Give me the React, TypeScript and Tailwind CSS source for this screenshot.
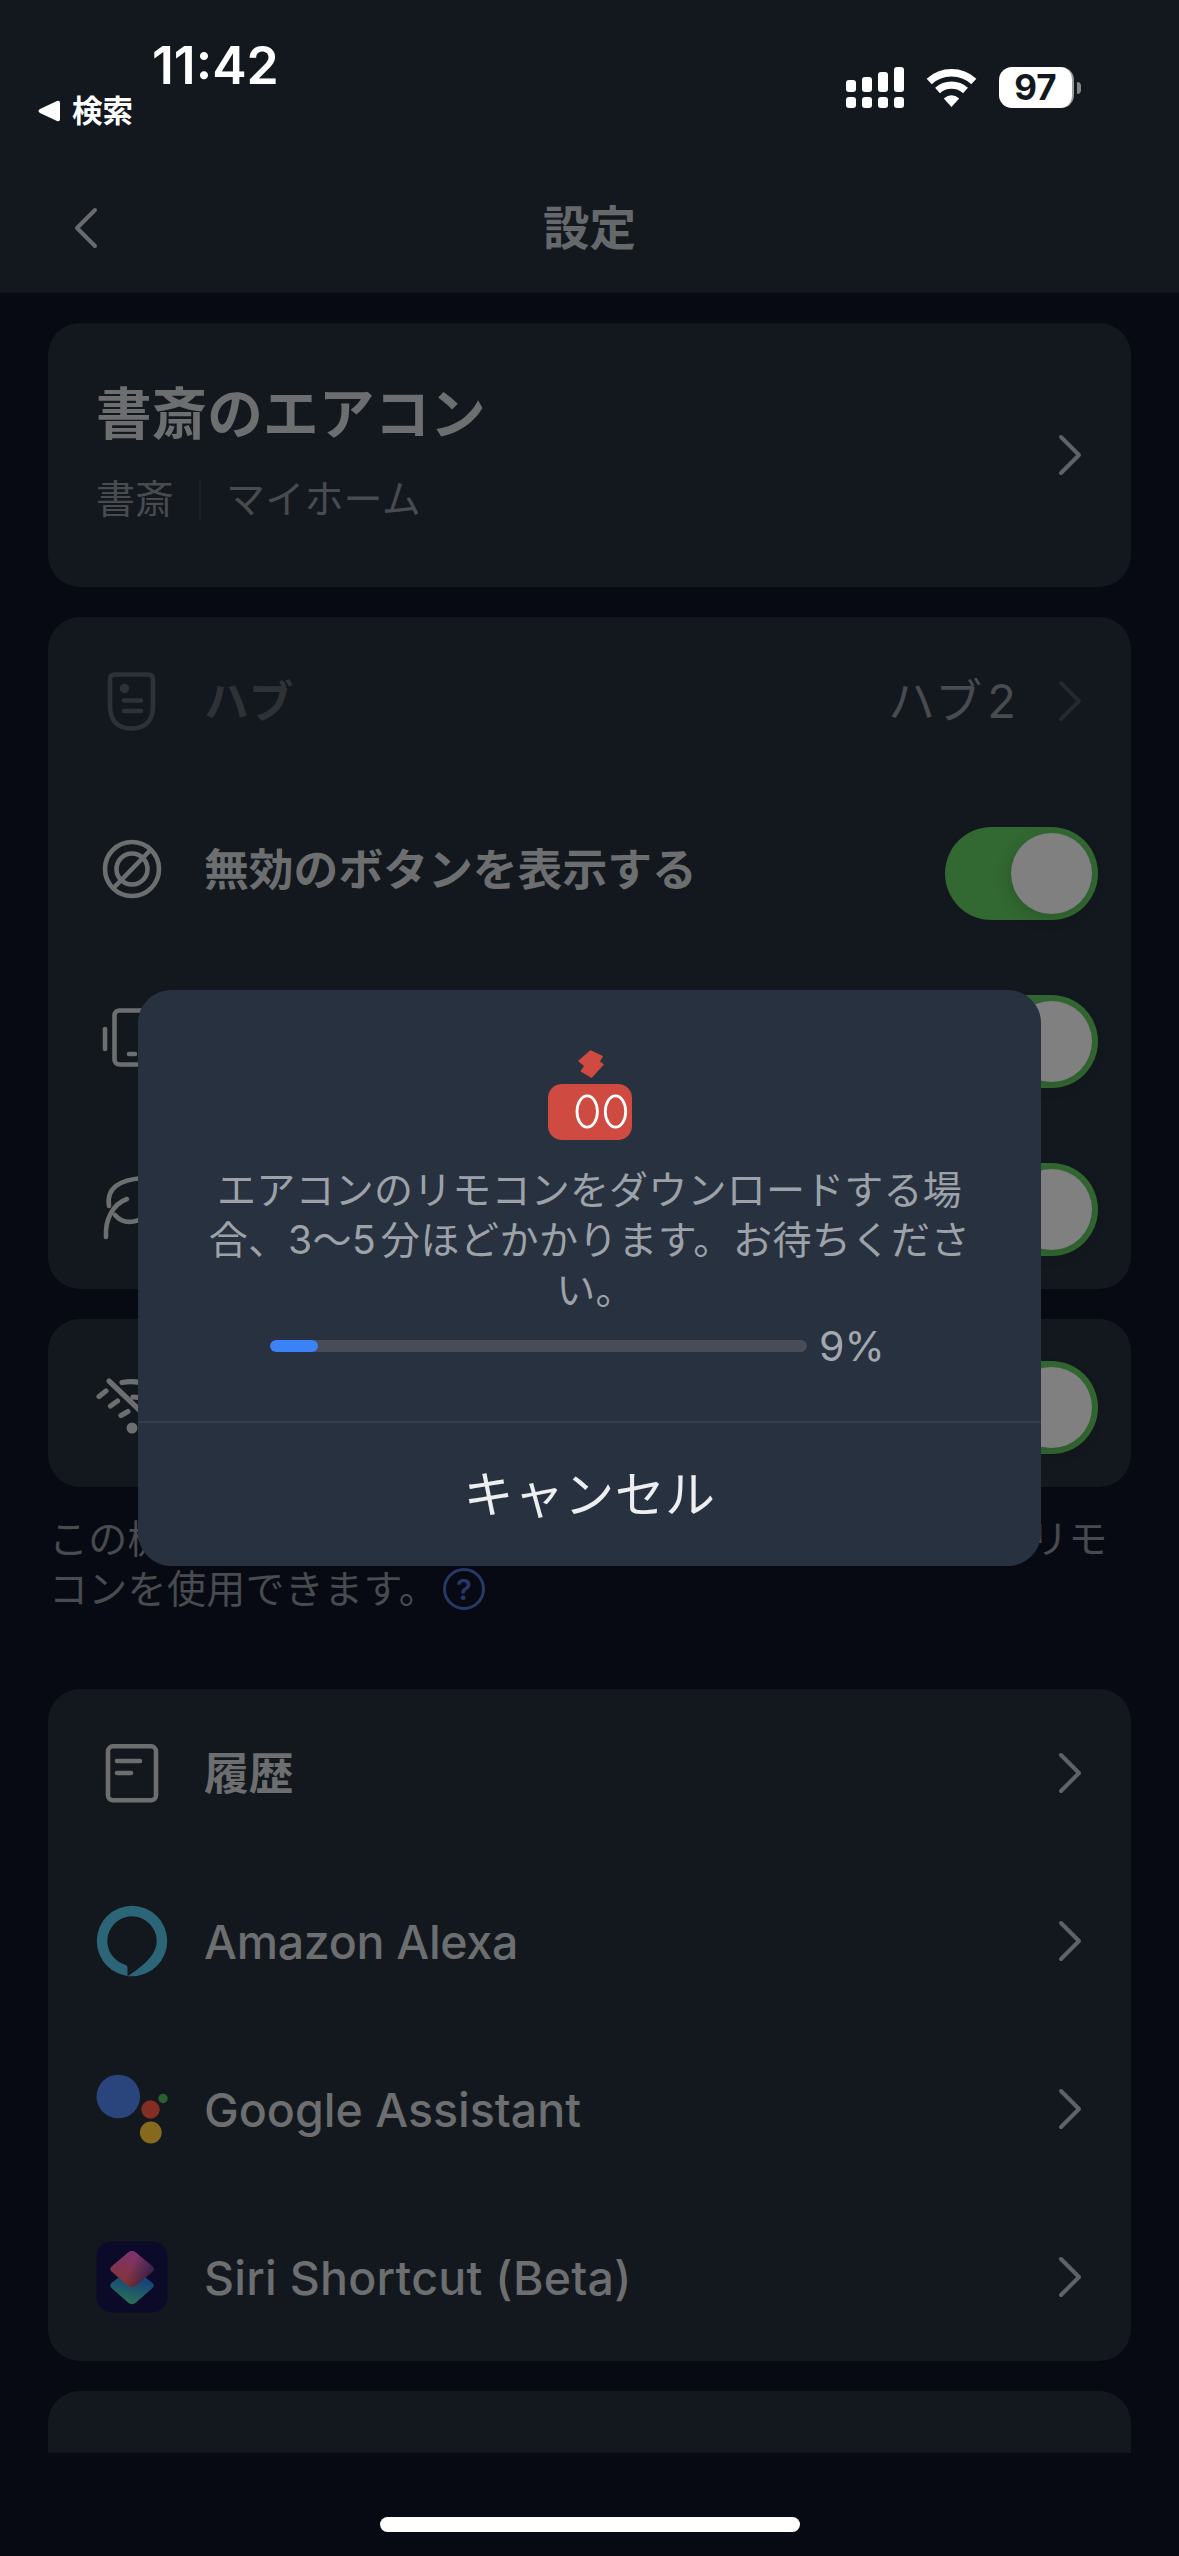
import type { ReactNode } from "react";

function Chevron({ className = "text-[#5f6266]" }: { className?: string }) {
  return (
    <svg viewBox="0 0 24 42" className={`h-[42px] w-6 shrink-0 ${className}`} fill="none" stroke="currentColor" strokeWidth="4" strokeLinecap="round" strokeLinejoin="round">
      <path d="M3 3 21 21 3 39" />
    </svg>
  );
}

function Toggle() {
  return (
    <div className="mt-[9px] flex h-[93px] w-[153px] shrink-0 items-center justify-end rounded-full bg-[#326832] pr-1.5">
      <div className="size-[81px] rounded-full bg-[#808080] shadow-[-2px_4px_16px_rgba(0,0,0,0.15)]" />
    </div>
  );
}

function LineIcon({ children }: { children: ReactNode }) {
  return (
    <svg viewBox="0 0 72 72" className="size-[72px]" fill="none" stroke="currentColor" strokeWidth="4.6" strokeLinecap="round" strokeLinejoin="round">
      {children}
    </svg>
  );
}

const HubIcon = () => (
  <LineIcon>
    <path d="M19 9.500H52Q57 9.500 57 14.500V41C57 55 50 63.500 35.500 63.500S14 55 14 41V14.500Q14 9.500 19 9.500Z" />
    <circle cx="28.500" cy="23.500" r="4.700" fill="currentColor" stroke="none" />
    <path d="M28 35.500H45M28 46H45" />
  </LineIcon>
);

const DisabledIcon = () => (
  <LineIcon>
    <circle cx="36" cy="36" r="27" />
    <circle cx="36" cy="36" r="15.500" />
    <path d="M18.500 54 53.500 18" />
  </LineIcon>
);

const VibrateIcon = () => (
  <LineIcon>
    <rect x="18.500" y="9.500" width="35" height="54" rx="5" />
    <path d="M9 28V48M63 28V48M33 53H39" />
  </LineIcon>
);

const FeatherIcon = () => (
  <LineIcon>
    <path d="M13 37C10 18 25 11 46 9M10 68C9 50 17 35 31 30M19 46C28 57 48 55 55 38" />
  </LineIcon>
);

const WifiOffIcon = () => (
  <LineIcon>
    <g strokeWidth="5.200">
      <path d="M13 14 57 56" />
      <path d="M3 29.500 10 24M14.500 39 21.500 34M25 48.500 32 44.500M26 15.500Q50 11 68 29M37 30Q49 30 58 39" />
    </g>
    <circle cx="36" cy="61" r="5.500" fill="currentColor" stroke="none" />
  </LineIcon>
);

const HistoryIcon = () => (
  <LineIcon>
    <rect x="12" y="9.300" width="48" height="54" rx="5" />
    <path d="M21 24H44M21 36H35" />
  </LineIcon>
);

const AlexaIcon = () => (
  <svg viewBox="0 0 72 72" className="size-[72px]">
    <path fill="#2c6478" fillRule="evenodd" d="M36 .8A35.200 35.200 0 1 1 36 71.200A35.200 35.200 0 1 1 36 .8ZM31.500 71.300V62Q31.500 60.500 29 59.700A24.700 24.700 0 1 1 60.700 36C60.700 49 49 60 31.500 71.300Z" />
  </svg>
);

const AssistantIcon = () => (
  <svg viewBox="0 0 72 72" className="size-[72px]">
    <circle cx="22.300" cy="23.500" r="21.800" fill="#29457c" />
    <circle cx="54.500" cy="36.500" r="9.200" fill="#832d23" />
    <circle cx="67" cy="25.500" r="4.700" fill="#29602f" />
    <circle cx="54.800" cy="59.500" r="10.900" fill="#856a1e" />
  </svg>
);

const ShortcutIcon = () => (
  <svg viewBox="0 0 72 72" className="size-[72px]">
    <defs>
      <linearGradient id="sc-low" x1="0.700" y1="0" x2="0.400" y2="1">
        <stop offset="0.300" stopColor="#17447b" />
        <stop offset="1" stopColor="#297353" />
      </linearGradient>
      <linearGradient id="sc-high" x1="0.600" y1="0" x2="0.400" y2="1">
        <stop offset="0" stopColor="#7c3275" />
        <stop offset="0.900" stopColor="#863434" />
      </linearGradient>
      <linearGradient id="sc-shade" x1="0.500" y1="0.400" x2="1" y2="0.600">
        <stop offset="0" stopColor="#26204a" stopOpacity="0" />
        <stop offset="1" stopColor="#2b1a45" stopOpacity="0.900" />
      </linearGradient>
    </defs>
    <rect x="0.500" y="0.500" width="71" height="71" rx="15" fill="#0c0a29" />
    <path d="M40 29 56.500 42Q59 44.500 56.500 47L40 61.500Q36 65 32 61.500L15.500 47Q13 44.500 15.500 42L32 29Q36 26 40 29Z" fill="url(#sc-low)" />
    <path d="M40 11.500 56.500 25.500Q59 28 56.500 30.500L40 44.500Q36 48 32 44.500L15.500 30.500Q13 28 15.500 25.500L32 11.500Q36 8 40 11.500Z" fill="url(#sc-high)" />
    <path d="M40 11.500 56.500 25.500Q59 28 56.500 30.500L40 44.500Q36 48 32 44.500L15.500 30.500Q13 28 15.500 25.500L32 11.500Q36 8 40 11.500Z" fill="url(#sc-shade)" />
  </svg>
);

const RobotIcon = () => (
  <svg viewBox="0 0 84 92" className="h-[92px] w-[84px]">
    <path fill="#cf4a41" stroke="#cf4a41" strokeWidth="1.500" strokeLinejoin="round" d="M31 13 42.500 3 54 8.500 51 13.500 55 16.500 43.500 29 33.500 23 37 18Z" />
    <rect y="36" width="84" height="56" rx="14" fill="#cf4a41" />
    <g fill="none" stroke="#fff" strokeWidth="2.800">
      <ellipse cx="39.200" cy="63.500" rx="10.200" ry="15.700" />
      <ellipse cx="67.500" cy="63.500" rx="10.200" ry="15.700" />
    </g>
  </svg>
);

function Row({ icon, label, right, dim = false, font = "text-[44.800px] font-bold" }: { icon: ReactNode; label?: string; right: ReactNode; dim?: boolean; font?: string }) {
  return (
    <div className="flex h-[168px] items-center pl-12 pr-[33px]">
      <div className={`shrink-0 ${dim ? "text-[#2e3236]" : "text-[#6c6e70]"}`}>{icon}</div>
      <div className={`ml-9 flex-1 whitespace-nowrap pt-[3px] ${font} ${dim ? "text-[#2e3236]" : "text-[#6c6e70]"}`}>{label}</div>
      {right}
    </div>
  );
}

const Card = ({ children, className = "" }: { children: ReactNode; className?: string }) => (
  <section className={`mx-12 rounded-[32px] bg-[#13181e] ${className}`}>{children}</section>
);

const arrow = <Chevron className="mr-4 text-[#5f6266]" />;

function StatusBar() {
  return (
    <div className="flex h-[162px] justify-between text-white">
      <div className="pl-[38px] pt-9">
        <div className="pl-[114px] text-[51.700px] font-semibold leading-[58px]">11:42</div>
        <div className="mt-px flex h-8 items-center">
          <svg viewBox="0 0 23 22" className="h-[22px] w-[23px]">
            <path d="M2 9 19 1Q22 0 22 3V19Q22 22 19 21L2 13Q-1 11 2 9Z" fill="#fff" />
          </svg>
          <span className="ml-[11px] text-[30.500px] font-bold">検索</span>
        </div>
      </div>
      <div className="mt-[67px] flex h-[41px] pr-[98px]">
        <svg viewBox="0 0 58 41" className="h-[41px] w-[58px]" fill="#fff">
          <rect y="13" width="10" height="12" rx="3" />
          <rect x="16" y="10" width="10" height="15" rx="3" />
          <rect x="32" y="5" width="10" height="20" rx="3" />
          <rect x="48" y="0" width="10" height="25" rx="3" />
          <rect y="30" width="10" height="11" rx="3" />
          <rect x="16" y="30" width="10" height="11" rx="3" />
          <rect x="32" y="30" width="10" height="11" rx="3" />
          <rect x="48" y="30" width="10" height="11" rx="3" />
        </svg>
        <svg viewBox="0 0 52 41" className="ml-[22px] h-[41px] w-[52px]" fill="none" stroke="#fff">
          <path d="M3.200 14.500A33 33 0 0 1 47.800 14.500" strokeWidth="7.500" />
          <path d="M11.500 23.500A21 21 0 0 1 39.500 23.500" strokeWidth="7.200" />
          <path d="M25.500 40 17.800 31.500Q25.500 25 33.200 31.500Z" fill="#fff" stroke="none" />
        </svg>
        <div className="ml-[21px] flex h-[41px] w-[75px] items-center justify-center rounded-[13px] border-r-2 border-[#9a9c9e] bg-white text-[35px] font-bold leading-none text-[#12181e]">97</div>
        <div className="ml-[3px] mt-[15px] h-3 w-1 rounded-r-full bg-[#84878a]" />
      </div>
    </div>
  );
}

export default function App() {
  return (
    <div className="relative flex h-[2556px] w-[1179px] flex-col overflow-hidden bg-[#070a12] font-['Inter','Noto_Sans_CJK_JP',sans-serif]">
      <header className="h-[293px] shrink-0 bg-[#13181f]">
        <StatusBar />
        <div className="flex h-[131px] items-center pl-[74px] pr-[98px] text-[#66696c]">
          <Chevron className="rotate-180 text-[#696b6e]" />
          <h1 className="flex-1 pt-[2px] text-center text-[46.500px] font-bold">設定</h1>
        </div>
      </header>

      <main className="flex h-[2160px] shrink-0 flex-col gap-[30px] overflow-hidden pt-[30px]">
        <Card className="flex h-[264px] shrink-0 items-center pl-[48px] pr-[49px]">
          <div className="-mt-[12px] flex-1">
            <div className="text-[55.700px] font-bold leading-[80px] text-[#6c6e70]">書斎のエアコン</div>
            <div className="mt-[20px] flex h-[50px] items-center text-[39px] text-[#484b4f]">
              書斎
              <span className="mx-[25px] h-10 w-[2px] bg-[#1a1f26]" />
              <span className="tracking-[0.200px]">マイホーム</span>
            </div>
          </div>
          <Chevron />
        </Card>

        <Card className="shrink-0">
          <Row
            dim
            icon={<HubIcon />}
            label="ハブ"
            right={
              <>
                <span className="mr-[42px] text-[47px] text-[#484b4f] [word-spacing:-8px]">ハブ 2</span>
                <Chevron className="mr-4 text-[#24292e]" />
              </>
            }
          />
          <Row icon={<DisabledIcon />} label="無効のボタンを表示する" right={<Toggle />} />
          <Row icon={<VibrateIcon />} right={<Toggle />} />
          <Row icon={<FeatherIcon />} right={<Toggle />} />
        </Card>

        <div className="h-[340px] shrink-0">
          <Card>
            <Row icon={<WifiOffIcon />} right={<Toggle />} />
          </Card>
          <div className="mt-[27px] whitespace-nowrap pl-[49px] text-[39px] leading-[50px] tracking-[0.300px] text-[#484b4f]">
            <div>この機能をオンにすると、インターネット接続なしでもリモ</div>
            <div className="flex items-center">
              コンを使用できます。
              <span className="ml-[5px] flex size-[42px] items-center justify-center rounded-full border-[3px] border-[#273869] text-[29px] font-semibold leading-none text-[#273869]">?</span>
            </div>
          </div>
        </div>

        <Card className="shrink-0">
          <Row icon={<HistoryIcon />} label="履歴" right={arrow} />
          <Row font="text-[46.500px] font-medium tracking-[-0.300px]" icon={<AlexaIcon />} label="Amazon Alexa" right={arrow} />
          <Row font="text-[46.500px] font-medium" icon={<AssistantIcon />} label="Google Assistant" right={arrow} />
          <Row font="text-[46.500px] font-medium tracking-[0.250px]" icon={<ShortcutIcon />} label="Siri Shortcut (Beta)" right={arrow} />
        </Card>

        <Card className="flex h-[168px] shrink-0 items-center justify-center text-[43px] text-[#4a2629]">削除</Card>
      </main>

      <div className="mx-auto mt-16 h-[15px] w-[420px] shrink-0 rounded-full bg-white" />

      <div role="dialog" className="absolute left-[138px] top-[990px] flex h-[576px] w-[903px] flex-col rounded-[33px] bg-[#28313f]">
        <div className="flex h-[431px] flex-col items-center pt-[58px]">
          <RobotIcon />
          <p className="mt-[25px] whitespace-nowrap text-center text-[39px] leading-[50px] tracking-[0.200px] text-[#9da2a9]">
            エアコンのリモコンをダウンロードする場
            <br />
            <span className="tracking-[0.550px] [word-spacing:-7px]">合、3〜5 分ほどかかります。お待ちくださ</span>
            <br />
            <span className="pl-3">い。</span>
          </p>
          <div className="mt-[6px] flex h-[50px] w-full items-center pl-[132px]">
            <div className="h-3 w-[537px] overflow-hidden rounded-full bg-[#484c56]">
              <div className="h-full rounded-full bg-[#3b82f6]" style={{ width: "9%" }} />
            </div>
            <span className="ml-3 pt-[2px] text-[41px] text-[#a3a8ae]">9%</span>
          </div>
        </div>
        <div className="flex flex-1 items-center justify-center border-t-2 border-[#333d4b] pt-[2px] text-[50px] tracking-[0.400px] text-[#eceeef]">キャンセル</div>
      </div>
    </div>
  );
}
